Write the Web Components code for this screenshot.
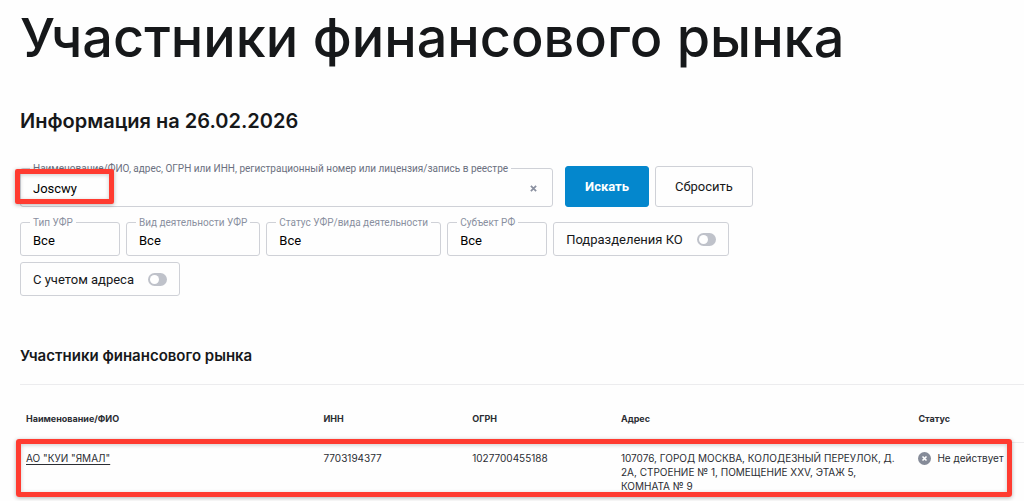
<!DOCTYPE html>
<html lang="ru">
<head>
  <meta charset="utf-8">
  <meta name="viewport" content="width=device-width, initial-scale=1">
  <title>Участники финансового рынка</title>
  <style>
    :root {
      --color-text: #16181a;
      --color-muted: #8a90a0;
      --color-border: #cfd1d7;
      --color-accent: #0487cd;
      --color-mark: #ff3b30;
      --font-form: Roboto, "Liberation Sans", sans-serif;
    }

    body {
      margin: 0;
      background: #fefefe;
      color: var(--color-text);
      font-family: Inter, "Liberation Sans", sans-serif;
      font-size: 13px;
    }
  </style>
</head>
<body>
  <market-page>
    <span slot="title">Участники финансового рынка</span>
    <span slot="date">Информация на 26.02.2026</span>
    <search-form slot="search"></search-form>
    <market-results slot="results"></market-results>
  </market-page>

  <script>
    class MarketPage extends HTMLElement {
      connectedCallback() {
        if (!this.shadowRoot) {
          this.attachShadow({ mode: 'open' });
          this.shadowRoot.innerHTML = `
            <style>
              :host {
                display: block;
                padding: 8px 0 7px 20px;
                overflow: hidden;
              }

              h1 {
                margin: 0 0 40px;
                font-size: 54px;
                font-weight: 500;
                line-height: 60px;
                white-space: nowrap;
              }

              h2 {
                margin: 0 0 32px;
                font-size: 20px;
                font-weight: 600;
                line-height: 26px;
              }
            </style>

            <main>
              <h1><slot name="title"></slot></h1>
              <h2><slot name="date"></slot></h2>
              <slot name="search"></slot>
              <slot name="results"></slot>
            </main>
          `;
        }
      }
    }

    customElements.define('market-page', MarketPage);

    // shared look of a box whose label sits in the top border
    const fieldStyles = `
      :host {
        display: block;
      }

      .field {
        position: relative;
        box-sizing: border-box;
        display: flex;
        flex-direction: column;
        height: 100%;
        padding: 0 9px 5px;
        border: 1px solid var(--color-border);
        border-radius: 3px;
      }

      label {
        align-self: flex-start;
        margin-top: -7px;
        padding: 0 3px;
        background: #fefefe;
        color: var(--color-muted);
        font-size: 10px;
        line-height: 14px;
        white-space: nowrap;
      }

      input, select {
        flex: 1;
        min-width: 0;
        margin: 0;
        padding: 0 3px;
        border: 0;
        outline: 0;
        appearance: none;
        background: transparent;
        color: #000;
        font: inherit;
      }
    `;

    class SearchField extends HTMLElement {
      connectedCallback() {
        if (!this.shadowRoot) {
          this.attachShadow({ mode: 'open' });
          this.shadowRoot.innerHTML = `
            <style>
              ${fieldStyles}

              label {
                color: #6b7080;
              }

              .row {
                flex: 1;
                display: flex;
                align-items: center;
              }

              button {
                display: flex;
                padding: 6px;
                border: 0;
                background: none;
                color: var(--color-muted);
              }

              .field::after {
                content: "";
                position: absolute;
                top: 0;
                bottom: 2px;
                left: -6px;
                width: 89px;
                border: 5px solid var(--color-mark);
                border-radius: 2px;
                box-shadow: 0 1px 4px rgba(0, 0, 0, 0.3), inset 0 1px 4px rgba(0, 0, 0, 0.2);
                pointer-events: none;
              }
            </style>

            <div class="field">
              <label for="query">${this.getAttribute('label')}</label>
              <div class="row">
                <input id="query" type="text" value="${this.getAttribute('value')}">
                <button type="button" aria-label="Очистить">
                  <svg width="7" height="7" viewBox="0 0 8 8" fill="none" stroke="currentColor" stroke-width="2">
                    <path d="M1 1l6 6M7 1L1 7"/>
                  </svg>
                </button>
              </div>
            </div>
          `;
        }
      }
    }

    customElements.define('search-field', SearchField);

    class FilterSelect extends HTMLElement {
      connectedCallback() {
        if (!this.shadowRoot) {
          this.attachShadow({ mode: 'open' });
          this.shadowRoot.innerHTML = `
            <style>
              ${fieldStyles}
            </style>

            <div class="field">
              <label for="filter">${this.getAttribute('label')}</label>
              <select id="filter"><option>Все</option></select>
            </div>
          `;
        }
      }
    }

    customElements.define('filter-select', FilterSelect);

    class FilterToggle extends HTMLElement {
      connectedCallback() {
        if (!this.shadowRoot) {
          this.attachShadow({ mode: 'open' });
          this.shadowRoot.innerHTML = `
            <style>
              :host {
                display: block;
              }

              label {
                box-sizing: border-box;
                display: flex;
                align-items: center;
                gap: 14px;
                height: 100%;
                padding: 0 12px;
                border: 1px solid var(--color-border);
                border-radius: 3px;
                white-space: nowrap;
              }

              input {
                display: flex;
                align-items: center;
                width: 19px;
                height: 13px;
                margin: 0;
                padding: 0 2px;
                box-sizing: border-box;
                appearance: none;
                border-radius: 7px;
                background: #bfc2ca;
              }

              input::before {
                content: "";
                width: 9px;
                height: 9px;
                border-radius: 50%;
                background: #fff;
              }

              input:checked {
                justify-content: flex-end;
                background: var(--color-accent);
              }
            </style>

            <label><slot></slot><input type="checkbox"></label>
          `;
        }
      }
    }

    customElements.define('filter-toggle', FilterToggle);

    class SearchForm extends HTMLElement {
      connectedCallback() {
        if (!this.shadowRoot) {
          this.attachShadow({ mode: 'open' });
          this.shadowRoot.innerHTML = `
            <style>
              :host {
                display: block;
                width: 73%;
                margin-bottom: 50px;
                font-family: var(--font-form);
              }

              .search, .filters {
                display: flex;
                gap: 6px;
              }

              .search {
                margin-bottom: 15px;
              }

              .filters {
                flex-wrap: wrap;
              }

              search-field {
                flex: 1;
                min-width: 0;
                margin: 2px 6px 0 0;
              }

              button {
                height: 41px;
                padding: 0 19px;
                border: 1px solid var(--color-border);
                border-radius: 3px;
                background: #fefefe;
                color: var(--color-text);
                font: inherit;
              }

              button.primary {
                border-color: var(--color-accent);
                background: var(--color-accent);
                color: #fff;
                font-weight: 700;
              }

              filter-select, filter-toggle {
                min-width: 100px;
                height: 34px;
              }
            </style>

            <form>
              <div class="search">
                <search-field
                  label="Наименование/ФИО, адрес, ОГРН или ИНН, регистрационный номер или лицензия/запись в реестре"
                  value="Joscwy"></search-field>
                <button class="primary" type="button">Искать</button>
                <button type="reset">Сбросить</button>
              </div>
              <div class="filters">
                <filter-select label="Тип УФР"></filter-select>
                <filter-select label="Вид деятельности УФР"></filter-select>
                <filter-select label="Статус УФР/вида деятельности"></filter-select>
                <filter-select label="Субъект РФ"></filter-select>
                <filter-toggle>Подразделения КО</filter-toggle>
                <filter-toggle>С учетом адреса</filter-toggle>
              </div>
            </form>
          `;
        }
      }
    }

    customElements.define('search-form', SearchForm);

    class StatusLabel extends HTMLElement {
      connectedCallback() {
        if (!this.shadowRoot) {
          this.attachShadow({ mode: 'open' });
          this.shadowRoot.innerHTML = `
            <style>
              :host {
                display: flex;
                align-items: center;
                gap: 6px;
                white-space: nowrap;
              }

              svg {
                flex: none;
              }
            </style>

            <svg width="13" height="13" viewBox="0 0 13 13">
              <circle cx="6.5" cy="6.5" r="6.5" fill="#858b98"/>
              <path d="M4.5 4.5l4 4M8.5 4.5l-4 4" stroke="#fff" stroke-width="1.6"/>
            </svg>
            <slot></slot>
          `;
        }
      }
    }

    customElements.define('status-label', StatusLabel);

    class MarketResults extends HTMLElement {
      connectedCallback() {
        if (!this.shadowRoot) {
          this.attachShadow({ mode: 'open' });
          this.shadowRoot.innerHTML = `
            <style>
              :host {
                display: block;
              }

              h3 {
                margin: 0;
                padding-bottom: 18px;
                border-bottom: 1px solid #ececee;
                font-size: 15px;
                font-weight: 600;
                line-height: 20px;
              }

              table {
                width: 100%;
                border-collapse: collapse;
                table-layout: fixed;
                color: #2b2d33;
                font-size: 10px;
                line-height: 14px;
              }

              th, td {
                box-sizing: border-box;
                padding: 8px 12px 1px 6px;
                text-align: left;
                vertical-align: top;
              }

              th {
                padding-top: 27px;
                padding-bottom: 16px;
                border-bottom: 1px solid #ececee;
                font-size: 9px;
                font-weight: 700;
              }

              /* columns share the row as 4 : 2 : 2 : 4 : 1.5 */
              .wide {
                width: calc(100% * 4 / 13.5);
              }

              .narrow {
                width: calc(100% * 2 / 13.5);
              }

              th:last-child, td:last-child {
                padding-right: 0;
              }

              a {
                color: inherit;
                text-underline-offset: 2px;
              }

              tr.marked {
                position: relative;
              }

              .marked td:first-child::after {
                content: "";
                position: absolute;
                top: -4px;
                right: 12px;
                bottom: -3px;
                left: -4px;
                border: 5px solid var(--color-mark);
                border-radius: 3px;
                box-shadow: 0 1px 4px rgba(0, 0, 0, 0.3), inset 0 1px 4px rgba(0, 0, 0, 0.2);
                pointer-events: none;
              }
            </style>

            <h3>Участники финансового рынка</h3>
            <table>
              <thead>
                <tr>
                  <th class="wide">Наименование/ФИО</th>
                  <th class="narrow">ИНН</th>
                  <th class="narrow">ОГРН</th>
                  <th class="wide">Адрес</th>
                  <th>Статус</th>
                </tr>
              </thead>
              <tbody>
                <tr class="marked">
                  <td><a href="#">АО "КУИ "ЯМАЛ"</a></td>
                  <td>7703194377</td>
                  <td>1027700455188</td>
                  <td>107076, ГОРОД МОСКВА, КОЛОДЕЗНЫЙ ПЕРЕУЛОК, Д. 2А, СТРОЕНИЕ № 1, ПОМЕЩЕНИЕ XXV, ЭТАЖ 5, КОМНАТА № 9</td>
                  <td><status-label>Не действует</status-label></td>
                </tr>
              </tbody>
            </table>
          `;
        }
      }
    }

    customElements.define('market-results', MarketResults);
  </script>
</body>
</html>
